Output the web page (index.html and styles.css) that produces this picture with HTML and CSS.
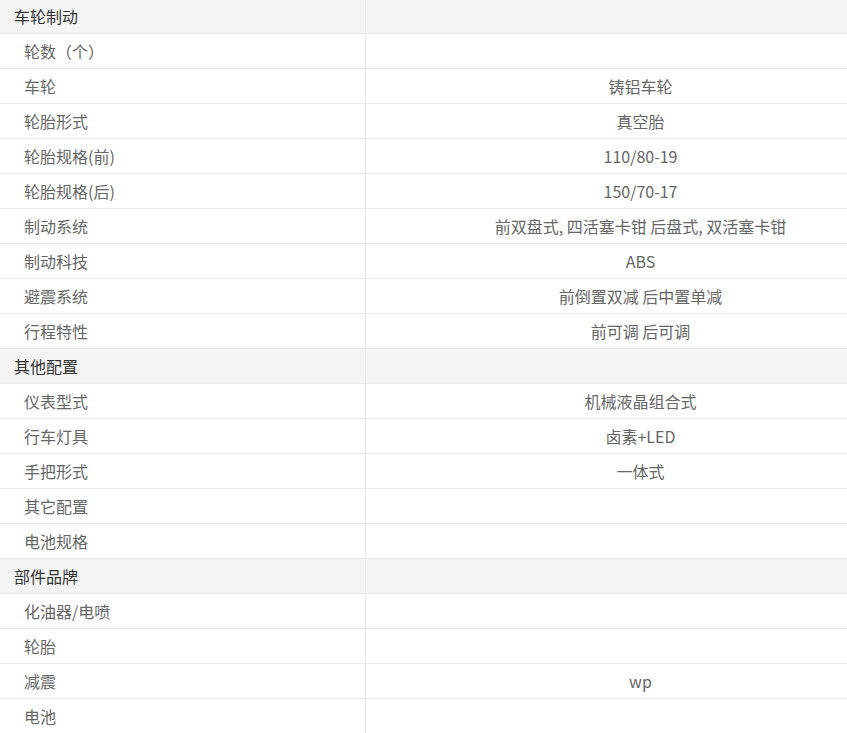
FILE: index.html
```html
<!DOCTYPE html>
<html lang="zh">
<head>
<meta charset="utf-8">
<link rel="stylesheet" href="styles.css">
</head>
<body>
<table class="spec">
  <tbody>
    <tr class="group"><td class="name">车轮制动</td><td class="val"></td></tr>
    <tr><td class="name">轮数<span class="punct">（个）</span></td><td class="val"></td></tr>
    <tr><td class="name">车轮</td><td class="val">铸铝车轮</td></tr>
    <tr><td class="name">轮胎形式</td><td class="val">真空胎</td></tr>
    <tr><td class="name">轮胎规格(前)</td><td class="val">110/80-19</td></tr>
    <tr><td class="name">轮胎规格(后)</td><td class="val">150/70-17</td></tr>
    <tr><td class="name">制动系统</td><td class="val">前双盘式, 四活塞卡钳 后盘式, 双活塞卡钳</td></tr>
    <tr><td class="name">制动科技</td><td class="val">ABS</td></tr>
    <tr><td class="name">避震系统</td><td class="val">前倒置双减 后中置单减</td></tr>
    <tr><td class="name">行程特性</td><td class="val">前可调 后可调</td></tr>
    <tr class="group"><td class="name">其他配置</td><td class="val"></td></tr>
    <tr><td class="name">仪表型式</td><td class="val">机械液晶组合式</td></tr>
    <tr><td class="name">行车灯具</td><td class="val">卤素+LED</td></tr>
    <tr><td class="name">手把形式</td><td class="val">一体式</td></tr>
    <tr><td class="name">其它配置</td><td class="val"></td></tr>
    <tr><td class="name">电池规格</td><td class="val"></td></tr>
    <tr class="group"><td class="name">部件品牌</td><td class="val"></td></tr>
    <tr><td class="name">化油器/电喷</td><td class="val"></td></tr>
    <tr><td class="name">轮胎</td><td class="val"></td></tr>
    <tr><td class="name">减震</td><td class="val">wp</td></tr>
    <tr><td class="name">电池</td><td class="val"></td></tr>
  </tbody>
</table>
</body>
</html>
```

FILE: styles.css
```css
html, body {
  margin: 0;
  padding: 0;
  background: #fff;
}
body {
  font-family: "Microsoft YaHei", "Noto Sans CJK SC", "Noto Sans", sans-serif;
  font-size: 16px;
  color: #666;
  overflow: hidden;
}
.spec {
  border-collapse: collapse;
  table-layout: fixed;
  width: 100%;
  margin-top: -2px;
}
.spec td {
  height: 34px;
  padding: 0;
  border-top: 1px solid #e8e8e8;
  border-bottom: 1px solid #e8e8e8;
  vertical-align: middle;
  line-height: 19px;
}
.spec .name {
  width: 351px;
  padding-left: 24px;
  border-right: 1px solid #e8e8e8;
}
.spec .val {
  text-align: center;
  padding-left: 68px;
}
.spec .group td {
  background: #f4f4f4;
  color: #333;
}
.spec .group .name {
  padding-left: 14px;
}
.punct {
  font-family: "Noto Sans CJK TC", "Noto Sans CJK SC", sans-serif;
}
```
